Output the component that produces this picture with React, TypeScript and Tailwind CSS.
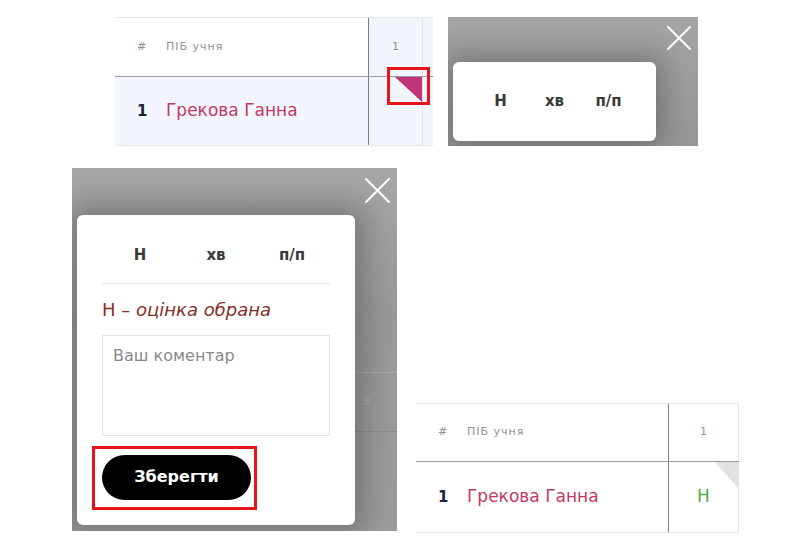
import type { ReactNode } from "react";

const FONT = { fontFamily: "'DejaVu Sans', 'Noto Sans', sans-serif" };

function CloseIcon({ size }: { size: number }) {
  return (
    <svg width={size} height={size} viewBox="0 0 24 24" fill="none">
      <path d="M1 1L23 23M23 1L1 23" stroke="white" strokeWidth="2" strokeLinecap="round" />
    </svg>
  );
}

function Corner({ w, h, color }: { w: number; h: number; color: string }) {
  return (
    <svg width={w} height={h} viewBox={`0 0 ${w} ${h}`} className="block">
      <polygon points={`0,0 ${w},0 ${w},${h}`} fill={color} />
    </svg>
  );
}

interface JournalProps {
  nameWidth: number;
  colWidth: number;
  tail: number;
  headH: number;
  rowH: number;
  tinted: boolean;
  cell: ReactNode;
  corner: ReactNode;
  className?: string;
}

// кусок журналу: шапка і один рядок учня
function Journal({ nameWidth, colWidth, tail, headH, rowH, tinted, cell, corner, className = "" }: JournalProps) {
  const tint = tinted ? "bg-[#f3f5fc]" : "bg-white";
  return (
    <div className={`relative border-y border-[#e6e8ee] ${className}`}>
      <div className="flex border-b border-[#9a9ca3]" style={{ height: headH }}>
        <div
          className="flex items-center bg-white text-[11px] tracking-[1px] text-[#8d929c]"
          style={{ width: nameWidth }}
        >
          <span className="w-[51px] pl-[22px]">#</span>
          <span>ПІБ учня</span>
        </div>
        <div
          className={`flex items-center justify-center border-l border-[#7d7f86] text-[11px] text-[#8d929c] ${tint}`}
          style={{ width: colWidth }}
        >
          1
        </div>
        <div className={`border-l border-[#e3e5ec] ${tint}`} style={{ width: tail }} />
      </div>
      <div className="flex" style={{ height: rowH }}>
        <div className={`flex items-center ${tint}`} style={{ width: nameWidth }}>
          <span className="w-[51px] pl-[22px] text-[15px] font-bold text-[#1b1f3b]">1</span>
          <span className="text-[17px] text-[#c23a60]">Грекова Ганна</span>
        </div>
        <div
          className={`relative flex items-center justify-center border-l border-[#7d7f86] ${tint}`}
          style={{ width: colWidth }}
        >
          {cell}
          <div className="absolute right-0 top-0">{corner}</div>
        </div>
        <div className={`border-l border-[#e3e5ec] ${tint}`} style={{ width: tail }} />
      </div>
    </div>
  );
}

function MarkOptions({ className }: { className: string }) {
  return (
    <div className={`grid text-center text-[15px] font-bold text-[#3a3a3a] ${className}`}>
      <span>Н</span>
      <span>хв</span>
      <span>п/п</span>
    </div>
  );
}

export default function App() {
  return (
    <div className="h-[544px] w-[812px] overflow-hidden bg-white pt-[17px]" style={FONT}>
      <div className="flex items-start">
        <div className="relative ml-[115px]">
          <Journal
            nameWidth={253}
            colWidth={54}
            tail={11}
            headH={59}
            rowH={68}
            tinted
            cell={null}
            corner={<Corner w={27} h={25} color="#c1347a" />}
          />
          <div className="absolute left-[272px] top-[50px] h-[38px] w-[43px] border-[3px] border-[#e8141b]" />
        </div>

        {/* вибір оцінки, згорнутий */}
        <div className="relative ml-[15px] h-[129px] w-[250px] overflow-hidden bg-[linear-gradient(180deg,#a4a4a4,#979797)]">
          <div className="absolute right-[7px] top-[9px]">
            <CloseIcon size={24} />
          </div>
          <div className="ml-[5px] mt-[45px] flex h-[79px] w-[203px] items-center justify-center rounded-[6px] bg-white shadow-[0_0_28px_8px_rgba(0,0,0,0.26)]">
            <MarkOptions className="grid-cols-[54px_54px_54px]" />
          </div>
        </div>
      </div>

      <div className="mt-[22px] flex items-start">
        {/* вибір оцінки з коментарем */}
        <div className="relative ml-[72px] h-[363px] w-[325px] overflow-hidden bg-[linear-gradient(180deg,#a6a6a6,#999999_40%,#9c9c9c)]">
          <div className="absolute left-[283px] right-0 top-[204px] h-px bg-[#a9a9a9]" />
          <div className="absolute left-[283px] right-0 top-[263px] h-px bg-[#8c8c8c]" />
          <span className="absolute left-[291px] top-[226px] text-[11px] text-[#aaa]">8</span>
          <div className="absolute right-[7px] top-[10px]">
            <CloseIcon size={25} />
          </div>
          <div className="relative ml-[5px] mt-[47px] h-[310px] w-[278px] rounded-[6px] bg-white px-[25px] pt-[29px] shadow-[0_0_30px_10px_rgba(0,0,0,0.26)]">
            <MarkOptions className="grid-cols-3 pb-[16px]" />
            <div className="border-t border-[#e6e6e6]" />
            <p className="mt-[13px] text-[18px] leading-[26px] text-[#86301f]">
              Н <span className="italic">– оцінка обрана</span>
            </p>
            <textarea
              placeholder="Ваш коментар"
              className="mt-[12px] block h-[101px] w-full resize-none border border-[#e3e3e3] px-[10px] py-[8px] text-[16px] text-[#333] placeholder:text-[#8a8a8a] focus:outline-none"
            />
            <button className="mt-[19px] h-[45px] w-[149px] rounded-full bg-black text-[16px] font-bold text-white">
              Зберегти
            </button>
            <div className="absolute left-[15px] top-[231px] h-[64px] w-[165px] border-[3px] border-[#e8141b]" />
          </div>
        </div>

        <Journal
          className="ml-[19px] mt-[235px]"
          nameWidth={252}
          colWidth={70}
          tail={0}
          headH={58}
          rowH={70}
          tinted={false}
          cell={<span className="text-[17px] text-[#4fa84a]">Н</span>}
          corner={<Corner w={23} h={26} color="#e2e2e2" />}
        />
      </div>
    </div>
  );
}
